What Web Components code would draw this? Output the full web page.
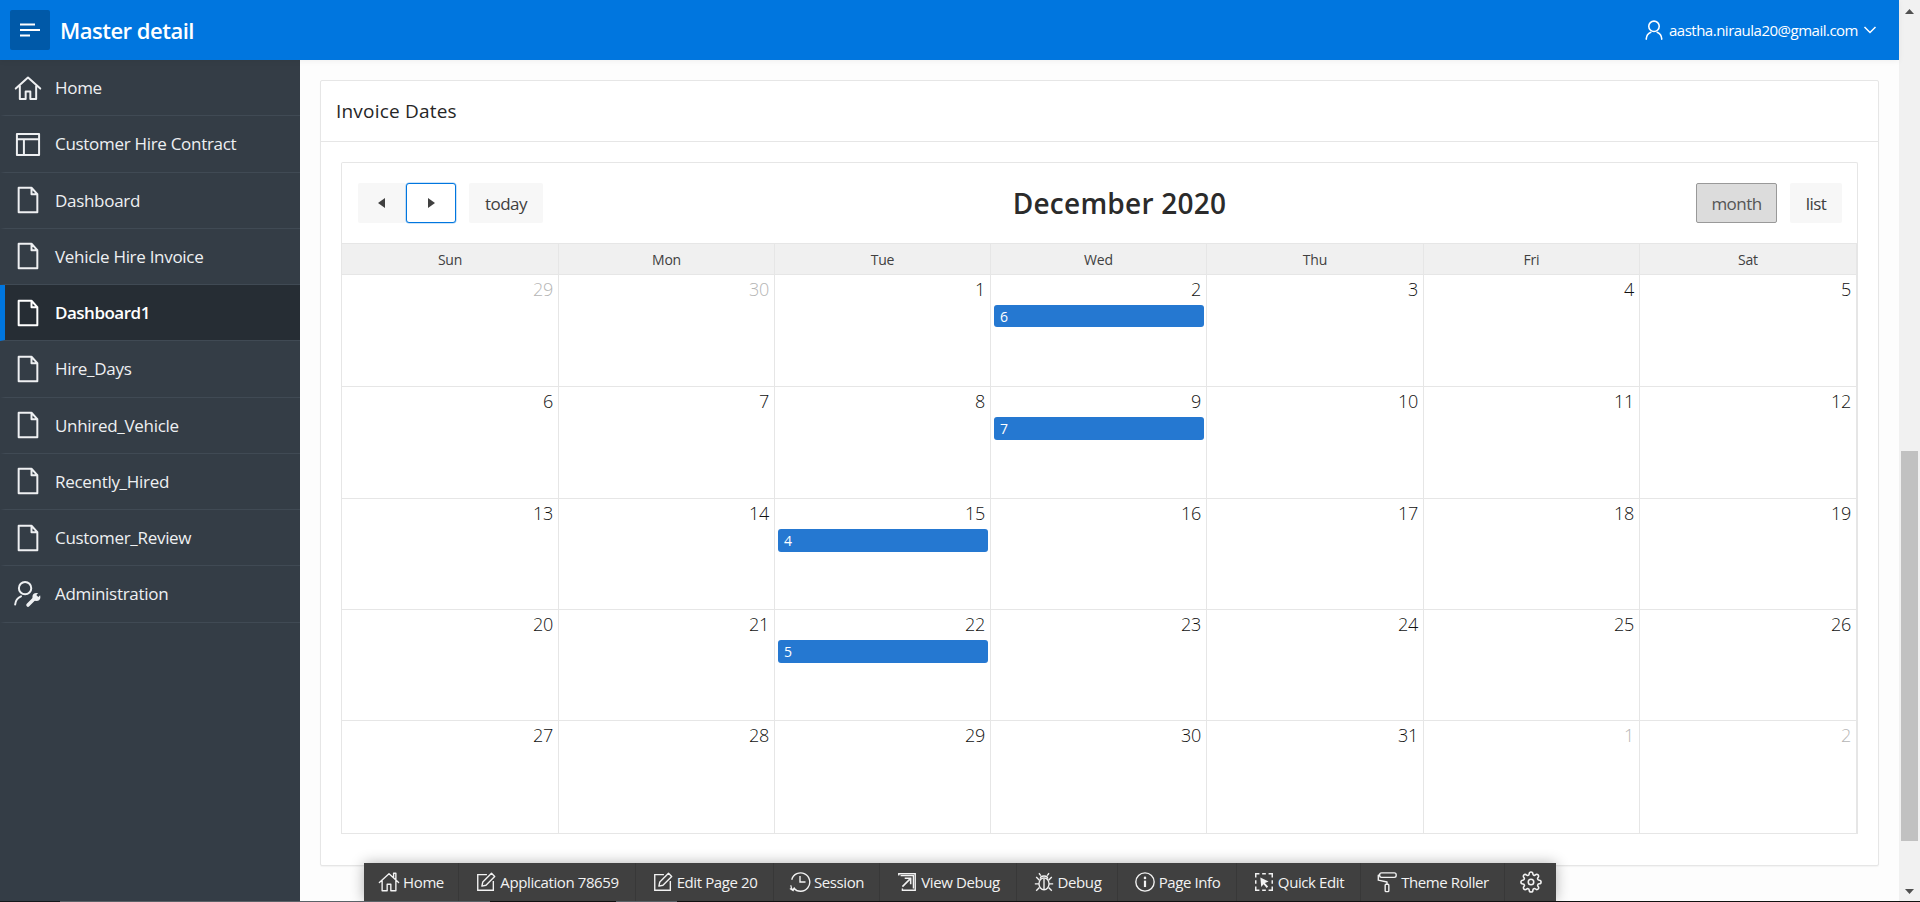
<!DOCTYPE html>
<html lang="en">
<head>
<meta charset="utf-8">
<title>Master detail</title>
<style>
html, body { margin: 0; height: 100%; overflow: hidden; }
body { font-family: "Open Sans", "Liberation Sans", sans-serif; background: #fdfdfd; }
</style>
</head>
<body>
<app-shell>
    <app-header slot="header" title="Master detail" user="aastha.niraula20@gmail.com"></app-header>
    <side-nav slot="nav">
        <nav-item icon="home" label="Home"></nav-item>
        <nav-item icon="layout" label="Customer Hire Contract"></nav-item>
        <nav-item icon="file" label="Dashboard"></nav-item>
        <nav-item icon="file" label="Vehicle Hire Invoice"></nav-item>
        <nav-item icon="file" label="Dashboard1" active></nav-item>
        <nav-item icon="file" label="Hire_Days"></nav-item>
        <nav-item icon="file" label="Unhired_Vehicle"></nav-item>
        <nav-item icon="file" label="Recently_Hired"></nav-item>
        <nav-item icon="file" label="Customer_Review"></nav-item>
        <nav-item icon="admin" label="Administration"></nav-item>
    </side-nav>
    <region-card slot="main" heading="Invoice Dates">
        <month-calendar></month-calendar>
    </region-card>
    <dev-toolbar slot="toolbar"></dev-toolbar>
    <fake-scrollbar slot="scrollbar"></fake-scrollbar>
</app-shell>

<script>
const ICONS = {
    home: '<path d="M1.500 12.500 12 3l10.500 9.500M5 10v11.500h5v-6.500h4v6.500h5V10" fill="none" stroke="currentColor" stroke-width="1.700" stroke-linejoin="round" stroke-linecap="round"/>',
    layout: '<path d="M2.500 3.500h19v18h-19zM2.500 8h19M8.500 8v13.500" fill="none" stroke="currentColor" stroke-width="1.700" stroke-linejoin="round"/>',
    file: '<path d="M4 1.500h11l5 5.500v15.500H4zM15 1.500V7h5" fill="none" stroke="currentColor" stroke-width="1.700" stroke-linejoin="round"/>',
    admin: '<circle cx="9.500" cy="7" r="5.300" fill="none" stroke="currentColor" stroke-width="1.700"/><path d="M1 21c.3-3.500 2.500-6 5-7" fill="none" stroke="currentColor" stroke-width="1.700" stroke-linecap="round"/><path d="M12 21.500l6-6" stroke="currentColor" stroke-width="3" stroke-linecap="round"/><circle cx="19.200" cy="14.500" r="3.400" fill="currentColor"/><path d="M20 13.700l3-3" stroke="#343d46" stroke-width="2.400"/>',
    user: '<circle cx="12" cy="8" r="5.700" fill="none" stroke="currentColor" stroke-width="1.700"/><path d="M3.500 22c.3-4 2.500-6.500 5-7.500M20.500 22c-.3-4-2.500-6.500-5-7.500" fill="none" stroke="currentColor" stroke-width="1.700" stroke-linecap="round"/>',
    thome: '<path d="M1.500 12.500 12 3l10.500 9.500M4.500 10.500V21.500h5.500v-7h4v7h5.500V10.500M17 7V2.500h2.500v7" fill="none" stroke="currentColor" stroke-width="1.500" stroke-linejoin="round" stroke-linecap="round"/>',
    edit: '<path d="M13 4H3v17h17V11" fill="none" stroke="currentColor" stroke-width="1.500"/><path d="M8.500 12 18 2.500l3.500 3.500-9.500 9.500-4.500 1z" fill="none" stroke="currentColor" stroke-width="1.500" stroke-linejoin="round"/>',
    session: '<path d="M5 18.500A10 10 0 1 0 3 9.500M12 5.500V12h6" fill="none" stroke="currentColor" stroke-width="1.500"/><path d="M2 15.500c0 2 1 4 2.500 5.500M1 19l3.500 2.500L6 18" fill="none" stroke="currentColor" stroke-width="1.300"/>',
    viewdebug: '<path d="M3 5V3h18v18H7v-2M19 19V5H5" fill="none" stroke="currentColor" stroke-width="1.500"/><path d="M7 17l9-9M9.500 8H16v6.500" fill="none" stroke="currentColor" stroke-width="1.700"/>',
    debug: '<ellipse cx="12" cy="14" rx="5.500" ry="6.500" fill="none" stroke="currentColor" stroke-width="1.500"/><path d="M8 8.500c0-4 8-4 8 0M12 8v12M6.500 14H2M17.500 14H22M7 10 3.500 6.500M17 10l3.500-3.500M7 18l-3.500 3.500M17 18l3.500 3.500M8.500 5 6.500 2.500M15.500 5l2-2.500" fill="none" stroke="currentColor" stroke-width="1.500"/>',
    info: '<circle cx="12" cy="12" r="10" fill="none" stroke="currentColor" stroke-width="1.500"/><circle cx="12" cy="7.500" r="1.400" fill="currentColor"/><path d="M12 10.500V17.500" stroke="currentColor" stroke-width="2.400"/>',
    quick: '<path d="M3 7V3h4M10 3h4M17 3h4v4M21 10v4M21 17v4h-4M14 21h-4M7 21H3v-4M3 14v-4" fill="none" stroke="currentColor" stroke-width="1.600"/><path d="M8 7l9 4.500-4 1.500 3.500 4-1.500 1.500-3.500-4-2.500 3z" fill="currentColor"/>',
    roller: '<rect x="4" y="2" width="18" height="5" rx="2" fill="none" stroke="currentColor" stroke-width="1.500"/><path d="M4 4.500H2.500V10L12 12v2.500" fill="none" stroke="currentColor" stroke-width="1.500" stroke-linejoin="round"/><rect x="10" y="14.500" width="4" height="8" rx="1" fill="none" stroke="currentColor" stroke-width="1.500"/>',
    gear: '<circle cx="12" cy="12" r="3" fill="none" stroke="currentColor" stroke-width="1.700"/><path d="M19.400 15a1.650 1.650 0 0 0 .33 1.820l.06.06a2 2 0 0 1 0 2.830 2 2 0 0 1-2.830 0l-.06-.06a1.650 1.650 0 0 0-1.820-.33 1.650 1.650 0 0 0-1 1.510V21a2 2 0 0 1-2 2 2 2 0 0 1-2-2v-.09A1.650 1.650 0 0 0 9 19.400a1.650 1.650 0 0 0-1.820.33l-.06.06a2 2 0 0 1-2.830 0 2 2 0 0 1 0-2.830l.06-.06a1.650 1.650 0 0 0 .33-1.820 1.650 1.650 0 0 0-1.510-1H3a2 2 0 0 1-2-2 2 2 0 0 1 2-2h.09A1.650 1.650 0 0 0 4.600 9a1.650 1.650 0 0 0-.33-1.820l-.06-.06a2 2 0 0 1 0-2.830 2 2 0 0 1 2.830 0l.06.06a1.650 1.650 0 0 0 1.820.33H9a1.650 1.650 0 0 0 1-1.510V3a2 2 0 0 1 2-2 2 2 0 0 1 2 2v.09a1.650 1.650 0 0 0 1 1.510 1.650 1.650 0 0 0 1.820-.33l.06-.06a2 2 0 0 1 2.830 0 2 2 0 0 1 0 2.830l-.06.06a1.650 1.650 0 0 0-.33 1.820V9a1.650 1.650 0 0 0 1.510 1H21a2 2 0 0 1 2 2 2 2 0 0 1-2 2h-.09a1.650 1.650 0 0 0-1.510 1z" fill="none" stroke="currentColor" stroke-width="1.700"/>'
};

const svgIcon = (name, size) =>
    `<svg width="${size}" height="${size}" viewBox="0 0 24 24" aria-hidden="true">${ICONS[name]}</svg>`;

class AppShell extends HTMLElement {
    connectedCallback() {
        this.attachShadow({ mode: 'open' }).innerHTML = `
            <style>
                :host { display: grid; width: 1920px; height: 902px; grid-template-columns: 300px 1599px 21px; grid-template-rows: 60px 841px 1px; position: relative; overflow: hidden; }
                #header { grid-column: 1 / 3; grid-row: 1; display: block; position: relative; z-index: 1; }
                #nav { grid-column: 1; grid-row: 2 / 4; display: block; }
                #main { grid-column: 2; grid-row: 2; padding: 20px 20px 0 20px; display: block; overflow: hidden; }
                #scroll { grid-column: 3; grid-row: 1 / 4; display: block; }
                #bottom { grid-column: 1 / 4; grid-row: 3; background: linear-gradient(90deg, #14181c 0 60px, #5b6268 60px 490px, #111 490px 616px, #5b6268 616px 677px, #111 677px); position: relative; z-index: 2; }
                #tool { position: absolute; left: 364px; top: 863px; display: block; z-index: 1; }
            </style>
            <slot id="header" name="header"></slot>
            <slot id="nav" name="nav"></slot>
            <slot id="main" name="main"></slot>
            <slot id="scroll" name="scrollbar"></slot>
            <div id="bottom"></div>
            <slot id="tool" name="toolbar"></slot>
        `;
    }
}

class AppHeader extends HTMLElement {
    connectedCallback() {
        this.attachShadow({ mode: 'open' }).innerHTML = `
            <style>
                :host { display: flex; align-items: center; height: 60px; background: #0076df; color: #fff; padding: 0 22px 0 10px; box-sizing: border-box; box-shadow: 0 1px 6px rgba(0,0,0,.06); }
                #menu { width: 40px; height: 40px; background: #0059a8; border-radius: 2px; display: flex; align-items: center; justify-content: center; }
                h1 { margin: 0 0 0 10px; font-size: 22px; font-weight: 600; flex: 1; letter-spacing: -.5px; }
                #user { display: flex; align-items: center; font-size: 15px; letter-spacing: -.5px; }
                #user svg:first-child { margin-right: 4px; }
                #user svg:last-child { margin-left: 5px; }
            </style>
            <div id="menu">
                <svg width="20" height="16" viewBox="0 0 20 16"><path d="M0 2.500h15M0 8h20M0 13.500h10" stroke="#fff" stroke-width="2"/></svg>
            </div>
            <h1>${this.getAttribute('title')}</h1>
            <div id="user">
                ${svgIcon('user', 22)}
                <span>${this.getAttribute('user')}</span>
                <svg width="14" height="14" viewBox="0 0 14 14"><path d="M1.500 4 7 9.500 12.500 4" fill="none" stroke="#fff" stroke-width="1.500"/></svg>
            </div>
        `;
    }
}

class SideNav extends HTMLElement {
    connectedCallback() {
        this.attachShadow({ mode: 'open' }).innerHTML = `
            <style>
                :host { display: flex; flex-direction: column; height: 100%; background: #343d46; }
            </style>
            <slot></slot>
        `;
    }
}

class NavItem extends HTMLElement {
    connectedCallback() {
        this.attachShadow({ mode: 'open' }).innerHTML = `
            <style>
                :host { display: flex; align-items: center; height: 56.25px; box-sizing: border-box; border-bottom: 1px solid #404a54; color: #eef0f2; font-size: 17px; letter-spacing: -.3px; border-left: 5px solid transparent; flex: none; }
                :host([active]) { background: #262d34; border-left-color: #0076df; color: #fff; font-weight: 600; letter-spacing: -.5px; }
                svg { margin-left: 9px; flex: none; }
                span { margin-left: 13px; white-space: nowrap; }
            </style>
            ${svgIcon(this.getAttribute('icon'), 28)}
            <span>${this.getAttribute('label')}</span>
        `;
    }
}

class RegionCard extends HTMLElement {
    connectedCallback() {
        this.attachShadow({ mode: 'open' }).innerHTML = `
            <style>
                :host { display: block; width: 1559px; height: 786px; box-sizing: border-box; background: #fff; border: 1px solid #e6e6e6; border-radius: 2px; box-shadow: 0 1px 1px rgba(0,0,0,.04); color: #262626; }
                header { height: 61px; box-sizing: border-box; border-bottom: 1px solid #e6e6e6; display: flex; align-items: center; padding-left: 15px; font-size: 19px; letter-spacing: .2px; }
                #body { padding: 20px 20px 0 20px; }
            </style>
            <header>${this.getAttribute('heading')}</header>
            <div id="body"><slot></slot></div>
        `;
    }
}

class ToolButton extends HTMLElement {
    connectedCallback() {
        this.attachShadow({ mode: 'open' }).innerHTML = `
            <style>
                :host { display: flex; align-items: center; justify-content: center; height: 40px; box-sizing: border-box; background: #f7f7f7; color: #404040; font-size: 17px; border-radius: 2px; letter-spacing: -.55px; }
                :host([pressed]) { background: #dcdcdc; border: 1px solid #999; color: #555; }
                :host([focused]) { background: #fff; border: 1px solid #0076df; border-radius: 3px; box-shadow: 0 0 0 .5px rgba(0,118,223,.4); }
            </style>
            <slot></slot>
        `;
    }
}

class MonthCalendar extends HTMLElement {
    connectedCallback() {
        const days = ['Sun', 'Mon', 'Tue', 'Wed', 'Thu', 'Fri', 'Sat'];
        const cells = [29, 30, 1, 2, 3, 4, 5, 6, 7, 8, 9, 10, 11, 12, 13, 14, 15, 16, 17, 18, 19, 20, 21, 22, 23, 24, 25, 26, 27, 28, 29, 30, 31, 1, 2];
        const events = { 3: '6', 10: '7', 16: '4', 23: '5' };
        const rowHeights = [112, 112, 111, 111, 113];
        const muted = i => i < 2 || i > 32;
        this.attachShadow({ mode: 'open' }).innerHTML = `
            <style>
                :host { display: block; width: 1517px; box-sizing: border-box; border: 1px solid #e6e6e6; border-bottom: 0; border-radius: 2px 2px 0 0; color: #262626; }
                #bar { height: 80px; box-sizing: border-box; display: flex; align-items: center; justify-content: space-between; padding: 0 15px 0 16px; }
                .group { display: flex; align-items: center; }
                #prev { width: 48px; }
                #next { width: 50px; }
                #today { width: 74px; margin-left: 13px; }
                #month { width: 81px; }
                #list { width: 52px; margin-left: 13px; }
                h2 { margin: 0; font-size: 28px; font-weight: 600; letter-spacing: .25px; color: #2b2b2b; }
                #head, .week { display: grid; grid-template-columns: 217px 216px 216px 216px 217px 216px 217px; }
                #head { height: 30px; background: #f0f0f0; border-top: 1px solid #e6e6e6; border-bottom: 1px solid #e6e6e6; box-sizing: content-box; }
                #head div { display: flex; align-items: center; justify-content: center; font-size: 14px; color: #404040; border-right: 1px solid #e6e6e6; letter-spacing: -.2px; }
                .week { box-sizing: border-box; border-bottom: 1px solid #e6e6e6; }
                .cell { border-right: 1px solid #e6e6e6; padding: 0 2px 0 3px; display: flex; flex-direction: column; min-width: 0; }
                .num { text-align: right; font-size: 18px; line-height: 28px; height: 30px; font-weight: 300; letter-spacing: -.3px; padding: 0 3px 0 0; color: #111; }
                .num.off { color: #b5b5b5; }
                .event { background: #2578d1; color: #fff; border-radius: 3px; height: 23px; line-height: 23px; font-size: 14px; padding-left: 6px; }
                .week.first .event { height: 22px; }
            </style>
            <div id="bar">
                <div class="group">
                    <tool-button id="prev"><svg width="8" height="10" viewBox="0 0 8 10"><path d="M7 0v10L0 5z" fill="#404040"/></svg></tool-button>
                    <tool-button id="next" focused><svg width="8" height="10" viewBox="0 0 8 10"><path d="M1 0v10l7-5z" fill="#404040"/></svg></tool-button>
                    <tool-button id="today">today</tool-button>
                </div>
                <h2>December 2020</h2>
                <div class="group">
                    <tool-button id="month" pressed>month</tool-button>
                    <tool-button id="list">list</tool-button>
                </div>
            </div>
            <div id="head">${days.map(d => `<div>${d}</div>`).join('')}</div>
            ${rowHeights.map((h, w) => `
                <div class="week${w == 0 ? ' first' : ''}" style="height:${h}px">
                    ${cells.slice(w * 7, w * 7 + 7).map((n, j) => {
                        const i = w * 7 + j;
                        return `<div class="cell"><div class="num${muted(i) ? ' off' : ''}">${n}</div>${events[i] ? `<div class="event">${events[i]}</div>` : ''}</div>`;
                    }).join('')}
                </div>`).join('')}
        `;
    }
}

class DevToolbar extends HTMLElement {
    connectedCallback() {
        const items = [
            ['thome', 'Home', 95], ['edit', 'Application 78659', 177], ['edit', 'Edit Page 20', 138],
            ['session', 'Session', 106], ['viewdebug', 'View Debug', 137], ['debug', 'Debug', 101],
            ['info', 'Page Info', 119], ['quick', 'Quick Edit', 124], ['roller', 'Theme Roller', 144], ['gear', '', 51]
        ];
        this.attachShadow({ mode: 'open' }).innerHTML = `
            <style>
                :host { display: flex; height: 38px; background: #404040; color: #f2f2f2; font-size: 15px; letter-spacing: -.4px; box-shadow: 0 0 14px rgba(0,0,0,.3); }
                div { display: flex; align-items: center; justify-content: center; gap: 3px; box-sizing: border-box; border-right: 1px solid #383838; white-space: nowrap; }
                div:last-child { border-right: 0; }
            </style>
            ${items.map(([icon, label, w]) => `<div style="width:${w}px">${svgIcon(icon, 22)}${label ? `<span>${label}</span>` : ''}</div>`).join('')}
        `;
    }
}

class FakeScrollbar extends HTMLElement {
    connectedCallback() {
        this.attachShadow({ mode: 'open' }).innerHTML = `
            <style>
                :host { display: block; height: 100%; background: #f1f1f1; position: relative; }
                #thumb { position: absolute; left: 2px; width: 17px; top: 451px; height: 390px; background: #c1c1c1; }
                svg { position: absolute; left: 6px; }
            </style>
            <svg style="top:9px" width="9" height="5" viewBox="0 0 9 5"><path d="M4.500 0 9 5H0z" fill="#505050"/></svg>
            <div id="thumb"></div>
            <svg style="top:889px" width="9" height="5" viewBox="0 0 9 5"><path d="M0 0h9L4.500 5z" fill="#505050"/></svg>
        `;
    }
}

customElements.define('app-shell', AppShell);
customElements.define('app-header', AppHeader);
customElements.define('side-nav', SideNav);
customElements.define('nav-item', NavItem);
customElements.define('region-card', RegionCard);
customElements.define('tool-button', ToolButton);
customElements.define('month-calendar', MonthCalendar);
customElements.define('dev-toolbar', DevToolbar);
customElements.define('fake-scrollbar', FakeScrollbar);
</script>
</body>
</html>
